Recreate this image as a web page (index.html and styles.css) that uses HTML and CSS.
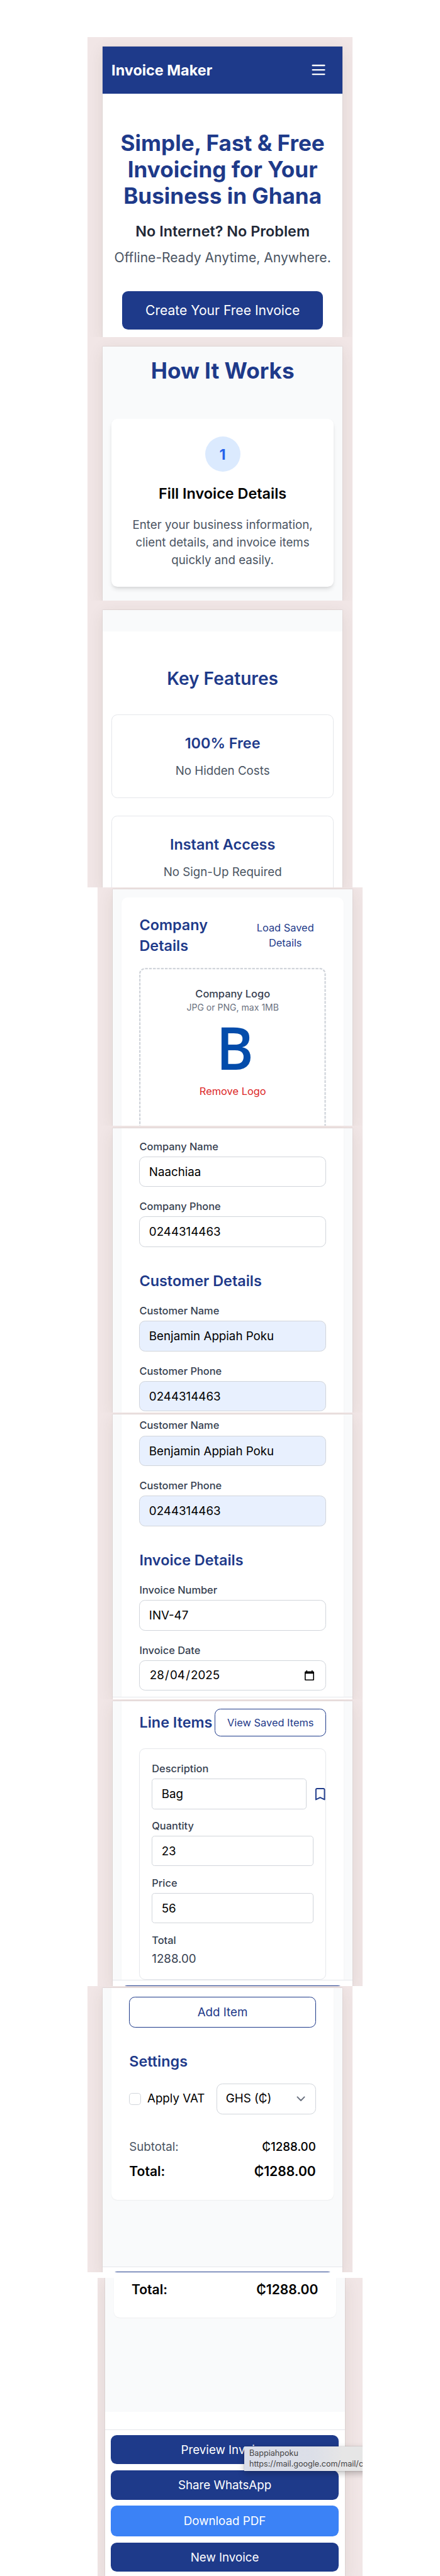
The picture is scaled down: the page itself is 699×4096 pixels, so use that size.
FILE: index.html
```html
<!DOCTYPE html>
<html lang="en">
<head>
<meta charset="utf-8">
<title>Invoice Maker</title>
<link rel="stylesheet" href="styles.css">
</head>
<body>
<section class="frame frame-hero">
  <div class="phone white">
    <header class="topbar">
      <span class="brand">Invoice Maker</span>
      <svg class="menu" viewBox="0 0 24 24" fill="none" stroke="#fff" stroke-width="2" stroke-linecap="round"><path d="M4 6h16M4 12h16M4 18h16"/></svg>
    </header>
    <h1 class="display hero-title">Simple, Fast &amp; Free<br>Invoicing for Your<br>Business in Ghana</h1>
    <p class="hero-sub">No Internet? No Problem</p>
    <p class="hero-lead">Offline-Ready Anytime, Anywhere.</p>
    <div class="cta">Create Your Free Invoice</div>
  </div>
</section>

<section class="frame frame-how">
  <div class="phone">
    <h2 class="display how-title">How It Works</h2>
    <div class="step">
      <div class="step-num">1</div>
      <h3 class="step-title">Fill Invoice Details</h3>
      <p class="step-text">Enter your business information,<br>client details, and invoice items<br>quickly and easily.</p>
    </div>
  </div>
</section>

<section class="frame frame-features">
  <div class="phone white">
    <div class="strip"></div>
    <h2 class="features-title">Key Features</h2>
    <div class="feature"><h3>100% Free</h3><p>No Hidden Costs</p></div>
    <div class="feature"><h3>Instant Access</h3><p>No Sign-Up Required</p></div>
  </div>
</section>

<section class="frame shifted frame-company">
  <div class="phone">
    <div class="card card-first">
      <div class="head-row">
        <h2 class="heading">Company<br>Details</h2>
        <div class="load-link">Load Saved<br>Details</div>
      </div>
      <div class="dropzone">
        <svg class="dashes" viewBox="0 0 296.7 320" fill="none"><rect x="1.15" y="1.15" width="294.4" height="317.7" rx="8.3" stroke="#d1d5db" stroke-width="2.3" stroke-dasharray="4.4 1.9"/></svg>
        <div class="logo-label">Company Logo</div>
        <div class="logo-hint">JPG or PNG, max 1MB</div>
        <div class="logo"><span class="logo-letter">B</span></div>
        <div class="remove">Remove Logo</div>
      </div>
    </div>
  </div>
</section>

<section class="frame shifted frame-customer">
  <div class="phone">
    <div class="card card-names">
      <div class="field"><div class="label">Company Name</div><div class="input">Naachiaa</div></div>
      <div class="field"><div class="label">Company Phone</div><div class="input">0244314463</div></div>
      <h2 class="heading gap">Customer Details</h2>
      <div class="field"><div class="label">Customer Name</div><div class="input filled">Benjamin Appiah Poku</div></div>
      <div class="field"><div class="label">Customer Phone</div><div class="input filled">0244314463</div></div>
    </div>
  </div>
</section>

<section class="frame shifted frame-invoice">
  <div class="phone">
    <div class="card card-invoice">
      <div class="field"><div class="label">Customer Name</div><div class="input filled">Benjamin Appiah Poku</div></div>
      <div class="field"><div class="label">Customer Phone</div><div class="input filled">0244314463</div></div>
      <h2 class="heading gap">Invoice Details</h2>
      <div class="field"><div class="label">Invoice Number</div><div class="input">INV-47</div></div>
      <div class="field"><div class="label">Invoice Date</div>
        <div class="input date"><span>28<i>/</i>04<i>/</i>2025</span>
          <svg class="calendar" viewBox="0 0 15 16"><path fill="#000" fill-rule="evenodd" d="M2.4 0h1.7v1.4h6.8V0h1.7v1.4h.9A1.5 1.5 0 0 1 15 2.9v11.6a1.5 1.5 0 0 1-1.5 1.5h-12A1.5 1.5 0 0 1 0 14.5V2.9a1.5 1.5 0 0 1 1.5-1.5h.9zM1.6 5.2v9.2h11.8V5.2z"/></svg>
        </div>
      </div>
    </div>
    <div class="footer footer-thin"></div>
  </div>
</section>

<section class="frame shifted frame-items">
  <div class="phone">
    <div class="card card-items">
      <div class="head-row">
        <h2 class="heading">Line Items</h2>
        <div class="saved-btn">View Saved Items</div>
      </div>
      <div class="item">
        <div class="item-field"><div class="label">Description</div>
          <div class="desc-row"><div class="input square">Bag</div>
            <svg class="bookmark" viewBox="0 0 24 24" fill="none" stroke="#1e3a8a" stroke-width="2" stroke-linejoin="round"><path d="M5 5a2 2 0 0 1 2-2h10a2 2 0 0 1 2 2v16l-7-3.5L5 21V5z"/></svg>
          </div>
        </div>
        <div class="item-field"><div class="label">Quantity</div><div class="input square">23</div></div>
        <div class="item-field"><div class="label">Price</div><div class="input square">56</div></div>
        <div class="item-field"><div class="label">Total</div><div class="item-total">1288.00</div></div>
      </div>
    </div>
    <div class="footer footer-peek"><div class="peek"></div></div>
  </div>
</section>

<section class="frame frame-settings">
  <div class="phone">
    <div class="card card-settings">
      <div class="add-btn">Add Item</div>
      <h2 class="heading settings-title">Settings</h2>
      <div class="settings-row">
        <div class="vat"><span class="checkbox"></span><span>Apply VAT</span></div>
        <div class="select"><span>GHS (₵)</span>
          <svg class="chevron" viewBox="0 0 14 9" fill="none" stroke="#6b7280" stroke-width="2" stroke-linecap="round" stroke-linejoin="round"><path d="M1.5 1.4l5.5 5.6 5.5-5.6"/></svg>
        </div>
      </div>
      <div class="sum-row"><span class="muted">Subtotal:</span><span class="medium">₵1288.00</span></div>
      <div class="total-row"><span>Total:</span><span>₵1288.00</span></div>
    </div>
    <div class="footer footer-peek footer-end"><div class="peek"></div></div>
  </div>
</section>

<section class="frame shifted frame-actions">
  <div class="phone">
    <div class="card card-total">
      <div class="total-row"><span>Total:</span><span>₵1288.00</span></div>
    </div>
    <div class="blank"></div>
    <div class="footer actions">
      <div class="action">Preview Invoice</div>
      <div class="action">Share WhatsApp</div>
      <div class="action light">Download PDF</div>
      <div class="action">New Invoice</div>
    </div>
  </div>
  <div class="tooltip">Bappiahpoku<br>https://mail.google.com/mail/c</div>
</section>
</body>
</html>
```
FILE: styles.css
```css
* { box-sizing: border-box; }
body {
  margin: 0;
  padding-top: 58.9px;
  width: 699px;
  height: 4096px;
  overflow: hidden;
  background: #fff;
  font-family: Inter, "Liberation Sans", sans-serif;
  font-size: 18.74px;
  line-height: 28.1px;
  color: #000;
}
h1, h2, h3, p { margin: 0; }

/* Pink mount around each phone capture */
.frame {
  width: 421.5px;
  margin-left: 138.7px;
  padding-left: 24.6px;
  overflow: hidden;
  background: #f1e6e6;
}
.shifted { margin-left: 154.9px; }
.phone {
  display: flex;
  flex-direction: column;
  width: 380.7px;
  height: 100%;
  background: #f9fafb;
  box-shadow: 0 0 1px rgba(0,0,0,.3), 0 6px 24px rgba(60,60,30,.09);
}
.white { background: #fff; }

.frame-hero { height: 477.1px; padding-top: 15.3px; }
.topbar {
  display: flex;
  align-items: center;
  justify-content: space-between;
  height: 74.7px;
  padding: 0 23.7px 0 13.8px;
  background: #1e3a8a;
}
.brand { padding-top: 1px; font-size: 23.4px; font-weight: 700; color: #fff; }
.menu { width: 28.1px; height: 28.1px; }
.display {
  font-size: 35.1px;
  line-height: 42.1px;
  font-weight: 700;
  text-align: center;
  color: #1e3a8a;
}
.hero-title { margin-top: 56.9px; }
.hero-sub {
  margin-top: 19.6px;
  font-size: 23.4px;
  line-height: 32.8px;
  font-weight: 600;
  text-align: center;
  color: #1f2937;
}
.hero-lead {
  margin-top: 9.1px;
  font-size: 21.1px;
  line-height: 32.8px;
  text-align: center;
  white-space: nowrap;
  color: #4b5563;
}
.cta {
  align-self: center;
  width: 319.4px;
  height: 61.3px;
  margin-top: 36.7px;
  border-radius: 9.4px;
  background: #1e3a8a;
  color: #fff;
  font-size: 21.1px;
  line-height: 62px;
  text-align: center;
}

.frame-how { height: 419.4px; padding-top: 14.9px; }
.how-title { margin-top: 16.8px; }
.step {
  display: flex;
  flex-direction: column;
  align-items: center;
  height: 267.2px;
  margin: 56.1px 13.8px 0;
  padding-top: 28.1px;
  border-radius: 9.4px;
  background: #fff;
  text-align: center;
  box-shadow: 0 5px 7px -1px rgba(0,0,0,.1), 0 2px 5px -2px rgba(0,0,0,.1);
}
.step-num {
  width: 56.2px;
  height: 56.2px;
  border-radius: 50%;
  background: #dbeafe;
  color: #2563eb;
  font-size: 23.4px;
  line-height: 57px;
  font-weight: 700;
}
.step-title { margin-top: 19.2px; font-size: 23.4px; line-height: 32.8px; font-weight: 600; }
.step-text { margin-top: 19px; white-space: nowrap; color: #4b5563; }

.frame-features { height: 455.7px; padding-top: 15.1px; }
.strip { flex: none; height: 34px; background: #f9fafb; }
.features-title {
  margin-top: 56.5px;
  margin-bottom: 9px;
  font-size: 28.1px;
  line-height: 37.5px;
  font-weight: 600;
  text-align: center;
  color: #1e3a8a;
}
.feature {
  flex: none;
  height: 132.6px;
  margin: 28.5px 13.8px 0;
  padding-top: 28.8px;
  border: 1px solid #e5e7eb;
  border-radius: 9.4px;
  text-align: center;
}
.feature h3 { font-size: 23.4px; line-height: 32.8px; font-weight: 600; color: #1e3a8a; }
.feature p { margin-top: 13.8px; color: #4b5563; }

.card {
  flex: none;
  margin: 0 14px 0 13.8px;
  padding: 0 28.2px;
  background: #fff;
  box-shadow: 0 1px 2px rgba(0,0,0,.05);
}
.heading { font-size: 23.4px; line-height: 32.8px; font-weight: 600; color: #1e3a8a; white-space: nowrap; }
.head-row { display: flex; align-items: center; justify-content: space-between; }

.frame-company { height: 379.3px; padding-top: 3.2px; }
.card-first { height: 420px; margin-top: 12.5px; padding-top: 28.3px; border-radius: 9.4px; }
.load-link {
  width: 129.6px;
  font-size: 16.4px;
  line-height: 23.4px;
  text-align: center;
  color: #1e3a8a;
}
.dropzone {
  position: relative;
  height: 320px;
  margin-top: 17.9px;
  padding-top: 30.9px;
  text-align: center;
}
.dashes { position: absolute; left: 0; top: 0; width: 296.7px; height: 320px; }
.logo-label { font-size: 16.4px; line-height: 23.4px; font-weight: 500; color: #374151; }
.logo-hint { font-size: 14.05px; line-height: 18.7px; color: #6b7280; }
.logo { height: 112.4px; padding-left: 6px; line-height: 106px; }
.logo-letter {
  display: inline-block;
  font-family: "Open Sans", "Noto Sans", sans-serif;
  font-size: 94.7px;
  font-weight: 600;
  color: #034cab;
  transform: scaleX(.95);
}
.remove { font-size: 16.4px; line-height: 23.4px; color: #dc2626; }

.label { font-size: 16.4px; line-height: 24.3px; margin-bottom: -.9px; font-weight: 500; color: #374151; }
.input {
  height: 48.4px;
  margin-top: 4.8px;
  padding-left: 14.4px;
  border: 1px solid #d1d5db;
  border-radius: 9.4px;
  background: #fff;
  line-height: 47.4px;
}
.filled { background: #e8f0fe; }
.field .label + .input, .item-field .label + .input { margin-top: 5.7px; }
.label { margin-bottom: 0; }
.field .label + .input { margin-top: 3.9px; }
.item-field .label + .input { margin-top: 3.9px; }
.field + .field { margin-top: 19.1px; }
.heading.gap { margin: 38.2px 0 18.4px; }

.frame-customer { height: 455.4px; padding-top: 3.3px; }
.card-names { height: 453px; padding-top: 16.9px; }

.frame-invoice { height: 456.1px; padding-top: 3.4px; }
.card-invoice { height: 449px; padding-top: 5.3px; }
.date { display: flex; align-items: center; justify-content: space-between; padding: 0 17.9px 0 15.4px; }
.date i { font-style: normal; margin: 0 1.2px; }
.calendar { width: 15px; height: 16px; margin-top: -1px; }
.footer { flex: none; border-top: 1px solid #e5e7eb; background: #fff; }
.footer-thin { height: 4px; }

.frame-items { height: 455.8px; padding-top: 3.3px; }
.card-items { height: 443.2px; padding-top: 11.8px; }
.card-items .heading { padding-top: 1px; }
.saved-btn {
  width: 176.5px;
  height: 44.1px;
  border: 1px solid #1e3a8a;
  border-radius: 9.4px;
  color: #1e3a8a;
  font-size: 16.4px;
  line-height: 43px;
  text-align: center;
}
.item {
  height: 368px;
  margin-top: 19.4px;
  padding: 18.6px 18.6px 0 18.8px;
  border: 1px solid #e5e7eb;
  border-radius: 9.4px;
}
.item-field { margin-bottom: 14.3px; }
.square { border-radius: 4.7px; }
.desc-row { display: flex; align-items: center; width: 280px; }
.desc-row .input { width: 246px; flex: none; margin-top: 3.9px; }
.bookmark { flex: none; width: 23.4px; height: 23.4px; margin: 4.3px 0 0 9.6px; }
.item-total { margin-top: 4.2px; color: #374151; }
.footer-peek { height: 9.4px; padding: 7.4px 14px 0 13.8px; overflow: hidden; }
.peek { height: 47px; border-radius: 9.4px; background: #1e3a8a; }

.frame-settings { height: 455.7px; padding-top: 3.6px; }
.card-settings { height: 336.4px; padding-top: 14.1px; border-radius: 0 0 9.4px 9.4px; }
.add-btn {
  height: 48.6px;
  border: 1px solid #1e3a8a;
  border-radius: 9.4px;
  color: #1e3a8a;
  line-height: 47.6px;
  text-align: center;
}
.settings-title { margin: 37.9px 0 18.4px; }
.settings-row { display: flex; align-items: center; justify-content: space-between; height: 48.5px; }
.vat { display: flex; align-items: center; gap: 10px; white-space: nowrap; }
.checkbox { width: 18.7px; height: 18.7px; border: 1px solid #d1d5db; border-radius: 4.7px; }
.select {
  display: flex;
  align-items: center;
  justify-content: space-between;
  width: 158px;
  height: 48.5px;
  padding: 0 16px 0 14px;
  border: 1px solid #d1d5db;
  border-radius: 9.4px;
}
.chevron { width: 14px; height: 9px; }
.sum-row { display: flex; justify-content: space-between; margin-top: 38px; margin-bottom: 9.3px; }
.muted { color: #4b5563; }
.medium { font-weight: 500; }
.total-row { display: flex; justify-content: space-between; font-size: 21.1px; line-height: 32.8px; font-weight: 600; }
.footer-end { margin-top: auto; }

.frame-actions { position: relative; height: 474.1px; margin-top: 8.4px; padding-left: 12px; }
.card-total { height: 63.5px; padding-top: 3px; border-radius: 0 0 9.4px 9.4px; }
.blank { flex: none; height: 178.1px; border-bottom: 28px solid #fff; }
.actions {
  display: flex;
  flex-direction: column;
  gap: 9.5px;
  flex: 1;
  padding: 7.2px 9.4px 0 9px;
}
.action {
  flex: none;
  height: 46.8px;
  border-radius: 9.4px;
  background: #1e3a8a;
  color: #fff;
  line-height: 47.6px;
  text-align: center;
}
.light { height: 49px; line-height: 50px; background: #3b82f6; }

/* Browser tooltip hovering over the action buttons */
.tooltip {
  position: absolute;
  left: 233.6px;
  top: 268.6px;
  width: 200px;
  height: 39px;
  padding: 3px 0 0 7.5px;
  background: linear-gradient(90deg, #d9dde8 0%, #dcdfe8 55%, #e6e6e6 78%);
  box-shadow: 0 0 1px rgba(0,0,0,.4), 0 4px 10px rgba(0,0,0,.25);
  color: #444;
  font-size: 12.6px;
  line-height: 16.3px;
  white-space: nowrap;
}
```
